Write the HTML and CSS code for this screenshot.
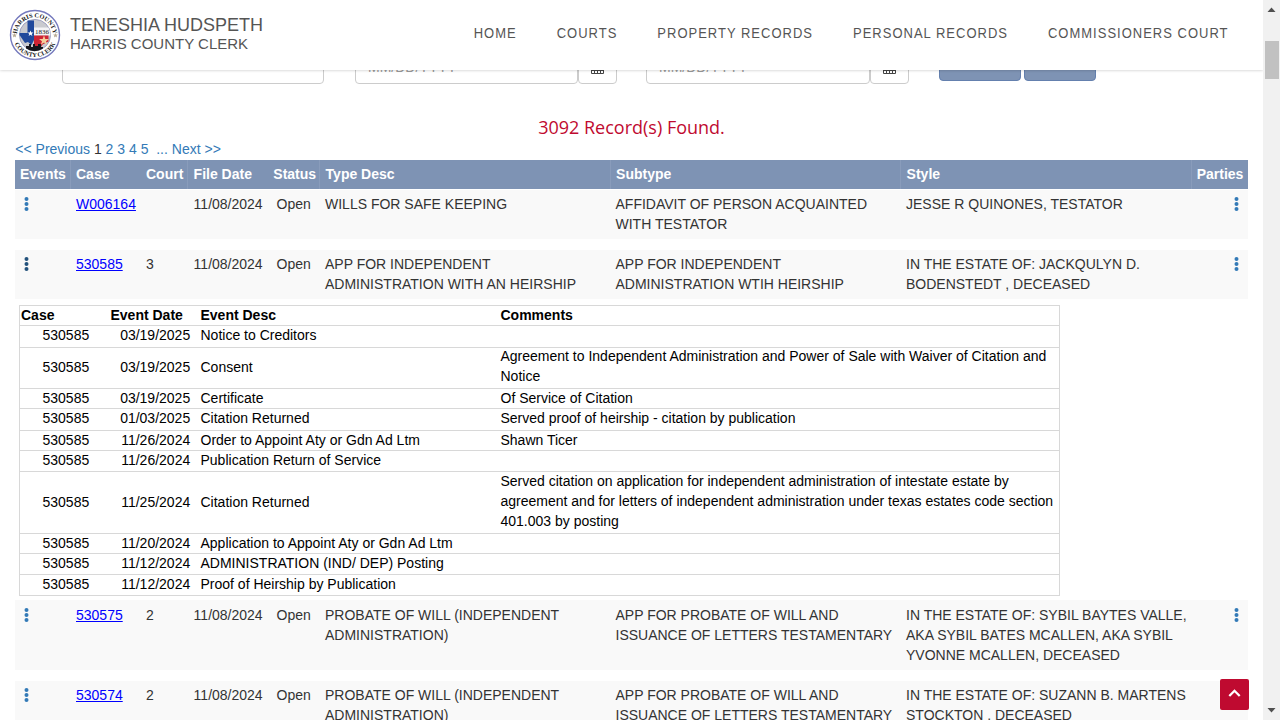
FILE: index.html
```html
<!DOCTYPE html>
<html lang="en">
<head>
<meta charset="utf-8">
<title>Harris County Clerk</title>
<link rel="stylesheet" href="styles.css">
</head>
<body>
<svg width="0" height="0" class="defs">
  <symbol id="dots" viewBox="0 0 5 14"><circle cx="2.5" cy="2" r="2"/><circle cx="2.5" cy="7" r="2"/><circle cx="2.5" cy="12" r="2"/></symbol>
  <symbol id="calendar" viewBox="0 0 14 14"><path d="M.5 2.500h12v11H.5zM.5 6.500h12M.5 10.500h12M3.500 6v7M6.500 6v7M9.500 6v7M4 0v3M10 0v3" fill="none" stroke="#444"/></symbol>
</svg>
<div class="page">
  <header class="topbar">
    <svg class="seal" viewBox="0 0 52 52">
      <circle cx="26" cy="26" r="24.5" fill="#fff" stroke="#7479bd" stroke-width="1.4"/>
      <circle cx="26" cy="26" r="15.6" fill="#c9cacf" stroke="#9093b8" stroke-width=".8"/>
      <path d="M25 18.500h14.500a15.500 15.500 0 0 1 2 8H25z" fill="#f4f4f6"/>
      <path d="M18.500 11.500h6.500V31l-2.500 5-3.500-3-3 1-5.500-8v-2h8z" fill="#21499b"/>
      <path d="M25 26.500h14.500v6l-6 3-2.500 4-6-3z" fill="#cf2434"/>
      <path d="M17 38.500v-1.500h3v-2h2v3h2v-3h2v2h3v-2h3v3h2v1.500a15 15 0 0 1-17 0z" fill="#15151c"/>
      <path d="M21.500 21.500l.8 2.100h2.200l-1.800 1.300.7 2.200-1.900-1.300-1.900 1.300.7-2.200-1.800-1.300h2.200z" fill="#fff"/>
      <path d="M35 26.500l1.300 3.500h3.700l-3 2.200 1.200 3.600-3.200-2.200-3.200 2.200 1.200-3.600-3-2.200h3.700z" fill="#f6cf9c"/>
      <path d="M5.500 24l.7 1.600h1.700l-1.300 1.100.5 1.700-1.600-1-1.600 1 .5-1.700-1.300-1.100h1.700zM46.500 24l.7 1.600h1.700l-1.300 1.100.5 1.700-1.600-1-1.600 1 .5-1.700-1.300-1.100h1.700z" fill="#b8ab96"/>
      <path id="arcTop" d="M8 24a18.200 18.200 0 0 1 36 0" fill="none"/>
      <path id="arcBottom" d="M4.200 30a22.200 22.200 0 0 0 43.600 0" fill="none"/>
      <text class="sealtext"><textPath href="#arcTop" startOffset="50%" text-anchor="middle">HARRIS COUNTY</textPath></text>
      <text class="sealtext"><textPath href="#arcBottom" startOffset="50%" text-anchor="middle">COUNTY CLERK</textPath></text>
      <text class="sealyear" x="26" y="25">1836</text>
    </svg>
    <div class="brand"><div class="name">TENESHIA HUDSPETH</div><div class="office">HARRIS COUNTY CLERK</div></div>
    <nav class="menu"><a>HOME</a><a>COURTS</a><a>PROPERTY RECORDS</a><a>PERSONAL RECORDS</a><a>COMMISSIONERS COURT</a></nav>
  </header>
  <section class="filters">
    <div class="field text"></div>
    <div class="field date">MM/DD/YYYY</div><div class="field pick"><svg width="14" height="14"><use href="#calendar"/></svg></div>
    <div class="field date second">MM/DD/YYYY</div><div class="field pick"><svg width="14" height="14"><use href="#calendar"/></svg></div>
    <div class="btn search"></div><div class="btn clear"></div>
  </section>
  <h1 class="found">3092 Record(s) Found.</h1>
  <div class="pager"><a>&lt;&lt; Previous</a> <b>1</b> <a>2</a> <a>3</a> <a>4</a> <a>5</a> &nbsp;<a>...</a> <a>Next &gt;&gt;</a></div>
  <main class="results">
    <div class="row head"><div>Events</div><div>Case</div><div>Court</div><div>File Date</div><div>Status</div><div>Type Desc</div><div>Subtype</div><div>Style</div><div>Parties</div></div>
    <div class="row item two">
      <div><svg class="dots"><use href="#dots"/></svg></div><div><a class="case">W006164</a></div><div></div><div>11/08/2024</div><div>Open</div>
      <div>WILLS FOR SAFE KEEPING</div><div>AFFIDAVIT OF PERSON ACQUAINTED<br>WITH TESTATOR</div><div>JESSE R QUINONES, TESTATOR</div><div><svg class="dots"><use href="#dots"/></svg></div>
    </div>
    <div class="row item two">
      <div><svg class="dots active"><use href="#dots"/></svg></div><div><a class="case">530585</a></div><div>3</div><div>11/08/2024</div><div>Open</div>
      <div>APP FOR INDEPENDENT<br>ADMINISTRATION WITH AN HEIRSHIP</div><div>APP FOR INDEPENDENT<br>ADMINISTRATION WTIH HEIRSHIP</div><div>IN THE ESTATE OF: JACKQULYN D.<br>BODENSTEDT , DECEASED</div><div><svg class="dots"><use href="#dots"/></svg></div>
    </div>
    <div class="events">
      <div class="ev evhead"><div>Case</div><div>Event Date</div><div>Event Desc</div><div>Comments</div></div>
      <div class="ev tall"><div>530585</div><div>03/19/2025</div><div>Notice to Creditors</div><div></div></div>
      <div class="ev double"><div>530585</div><div>03/19/2025</div><div>Consent</div><div>Agreement to Independent Administration and Power of Sale with Waiver of Citation and<br>Notice</div></div>
      <div class="ev"><div>530585</div><div>03/19/2025</div><div>Certificate</div><div>Of Service of Citation</div></div>
      <div class="ev tall"><div>530585</div><div>01/03/2025</div><div>Citation Returned</div><div>Served proof of heirship - citation by publication</div></div>
      <div class="ev"><div>530585</div><div>11/26/2024</div><div>Order to Appoint Aty or Gdn Ad Ltm</div><div>Shawn Ticer</div></div>
      <div class="ev mid"><div>530585</div><div>11/26/2024</div><div>Publication Return of Service</div><div></div></div>
      <div class="ev triple"><div>530585</div><div>11/25/2024</div><div>Citation Returned</div><div>Served citation on application for independent administration of intestate estate by<br>agreement and for letters of independent administration under texas estates code section<br>401.003 by posting</div></div>
      <div class="ev"><div>530585</div><div>11/20/2024</div><div>Application to Appoint Aty or Gdn Ad Ltm</div><div></div></div>
      <div class="ev mid"><div>530585</div><div>11/12/2024</div><div>ADMINISTRATION (IND/ DEP) Posting</div><div></div></div>
      <div class="ev"><div>530585</div><div>11/12/2024</div><div>Proof of Heirship by Publication</div><div></div></div>
    </div>
    <div class="row item three">
      <div><svg class="dots"><use href="#dots"/></svg></div><div><a class="case">530575</a></div><div>2</div><div>11/08/2024</div><div>Open</div>
      <div>PROBATE OF WILL (INDEPENDENT<br>ADMINISTRATION)</div><div>APP FOR PROBATE OF WILL AND<br>ISSUANCE OF LETTERS TESTAMENTARY</div><div>IN THE ESTATE OF: SYBIL BAYTES VALLE,<br>AKA SYBIL BATES MCALLEN, AKA SYBIL<br>YVONNE MCALLEN, DECEASED</div><div><svg class="dots"><use href="#dots"/></svg></div>
    </div>
    <div class="row item two">
      <div><svg class="dots"><use href="#dots"/></svg></div><div><a class="case">530574</a></div><div>2</div><div>11/08/2024</div><div>Open</div>
      <div>PROBATE OF WILL (INDEPENDENT<br>ADMINISTRATION)</div><div>APP FOR PROBATE OF WILL AND<br>ISSUANCE OF LETTERS TESTAMENTARY</div><div>IN THE ESTATE OF: SUZANN B. MARTENS<br>STOCKTON , DECEASED</div><div></div>
    </div>
  </main>
  <a class="totop"><svg width="13" height="8" viewBox="0 0 13 8"><path d="M1.300 7L6.500 1.800 11.700 7" fill="none" stroke="#fff" stroke-width="2.300"/></svg></a>
</div>
<aside class="scrollbar">
  <svg width="9" height="5"><path d="M.5 5L4.500.5 8.500 5z" fill="#505050"/></svg>
  <div class="thumb"></div>
  <svg class="down" width="9" height="5"><path d="M.5 0L4.500 4.500 8.500 0z" fill="#505050"/></svg>
</aside>
</body>
</html>
```
FILE: styles.css
```css
* { box-sizing: border-box; }
body { margin: 0; width: 1280px; height: 720px; overflow: hidden; display: flex; background: #fff; font: 14px/20px "Liberation Sans", Arial, sans-serif; color: #333; }
.defs { position: absolute; }
.page { width: 1263px; height: 720px; overflow: hidden; display: flex; flex-direction: column; position: relative; }
.page > * { flex-shrink: 0; }
.topbar { height: 70px; display: flex; align-items: center; padding: 0 34.500px 0 9px; box-shadow: 0 0 3px rgba(0,0,0,.25); background: #fff; position: relative; z-index: 2; }
.seal { width: 52px; height: 52px; }
.sealtext { font: bold 6.3px "Liberation Serif", serif; fill: #222; }
.sealyear { font: 7px "Liberation Serif", serif; fill: #222; }
.brand { margin-left: 9px; color: #555; white-space: nowrap; padding-bottom: 2px; }
.name { font-size: 18px; line-height: 20px; }
.office { font-size: 15px; line-height: 18px; }
.menu { margin-left: auto; display: flex; gap: 40px; font-size: 13px; letter-spacing: 1px; color: #555; padding-bottom: 3px; white-space: nowrap; transform: scaleY(1.09); }
.filters { height: 14px; overflow: hidden; display: flex; align-items: flex-end; padding-left: 62px; }
.field { height: 34px; flex: none; border: 1px solid #ccc; border-radius: 4px; line-height: 32px; color: #999; }
.text { width: 262px; margin-right: 31px; }
.date { width: 223px; padding-left: 12px; }
.second { margin-left: 29px; width: 224px; }
.pick { width: 39px; padding: 9px 12px; line-height: 0; }
.btn { flex: none; height: 34px; margin-bottom: 3px; background: #7e93b4; border: 1px solid #6480ae; border-radius: 4px; }
.search { width: 82px; margin-left: 30px; }
.clear { width: 72px; margin-left: 3px; }
.found { margin: 30px 0 0; height: 26px; font: 18px/26px "Open Sans", sans-serif; color: #bf0a30; text-align: center; }
.pager { height: 20px; margin-top: -1px; padding-left: 15.300px; color: #337ab7; }
.pager b { color: #333; font-weight: normal; }
.results { padding-left: 15px; margin-top: 1px; }
.row { width: 1233px; display: grid; grid-template-columns: 56px 70px 47px 78px 54px 290.500px 290.500px 290.500px 56.500px; }
.row > div { white-space: nowrap; }
.head { height: 29px; margin-bottom: 1px; background: #7e93b4; color: #fff; font-weight: bold; line-height: 28px; }
.head > div { padding-left: 5px; border-right: 1px solid #899cbb; }
.head > div:nth-child(2), .head > div:nth-child(4), .head > div:last-child { border-right-color: transparent; }
.head > div:nth-child(5) { padding-left: 7.300px; }
.head > div:nth-child(n+6) { padding-left: 5.600px; }
.head > div:last-child { padding-left: 5.200px; }
.item { background: #f9f9f9; padding-top: 5px; margin-bottom: 11px; }
.item > div { padding-left: 5px; }
.item > div:first-child { padding-left: 9px; }
.row > div:nth-child(4) { padding-left: 5.600px; }
.item > div:nth-child(5) { padding-left: 10.600px; }
.item > div:last-child { padding-left: 42px; }
.two { height: 49px; padding-top: 4px; }
.three { height: 70px; }
.dots { display: block; width: 5px; height: 14px; margin-top: 2.500px; fill: #337ab7; }
.active { fill: #23527c; }
.case { color: #00f; text-decoration: underline; }
.events { width: 1041px; margin: -5px 0 4px 4px; border: 1px solid #d8d8d8; color: #000; }
.ev { height: 20px; display: grid; grid-template-columns: 90.500px 90px 300px 1fr; align-items: center; line-height: 18px; padding-bottom: 1px; border-bottom: 1px solid #d8d8d8; }
.ev:last-child { border-bottom: 0; padding-bottom: 2px; }
.ev > div { white-space: nowrap; }
.ev > div:first-child { padding-left: 22.500px; }
.ev > div:nth-child(2) { text-align: right; padding-right: 10.300px; }
.evhead { font-weight: bold; }
.ev.evhead > div:first-child { padding-left: 1px; }
.ev.evhead > div:nth-child(2) { text-align: left; padding: 0; }
.mid { height: 21px; padding-bottom: 2px; }
.tall { height: 22px; padding-bottom: 3px; }
.double { height: 41px; padding-bottom: 2px; }
.triple { height: 62px; padding-bottom: 2px; }
.double > div:last-child { line-height: 19.500px; margin-top: -1px; }
.triple > div:last-child { line-height: 20px; margin-top: -1px; }
.totop { position: absolute; left: 1220px; top: 679px; width: 29px; height: 31px; border-radius: 2px; background: #bf0a30; display: flex; align-items: center; justify-content: center; padding-bottom: 4px; }
.scrollbar { width: 17px; height: 720px; background: #f1f1f1; display: flex; flex-direction: column; align-items: center; padding: 7px 0; }
.thumb { width: 14px; height: 38px; background: #c1c1c1; margin-top: 29px; }
.down { margin-top: auto; }
```
